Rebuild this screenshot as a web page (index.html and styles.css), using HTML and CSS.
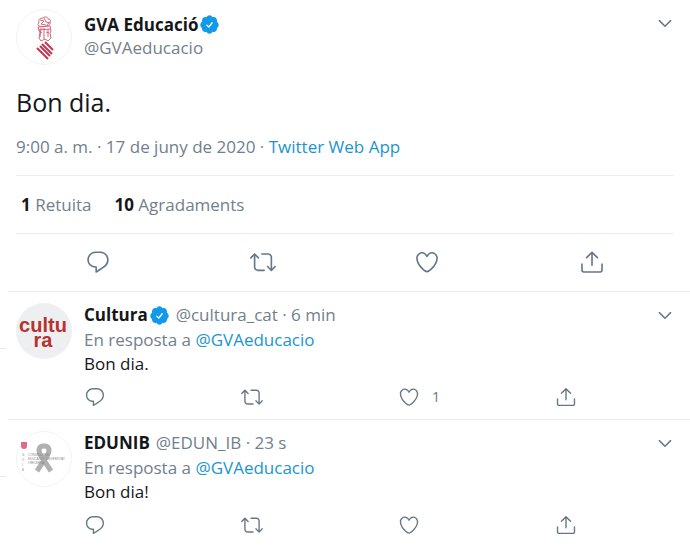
FILE: index.html
```
<!DOCTYPE html>
<html lang="ca">
<head>
    <meta charset="UTF-8">
    <meta name="viewport" content="width=device-width, initial-scale=1.0">
    <title>GVA Educació</title>
    <link rel="stylesheet" href="styles.css">
</head>
<body>

<!-- Shared icons -->
<svg class="sprite" aria-hidden="true">
    <symbol id="reply" viewBox="0 0 24 24">
        <path d="M14.046 2.242l-4.148-.01h-.002c-4.374 0-7.8 3.427-7.8 7.802 0 4.098 3.186 7.206 7.465 7.37v3.828c0 .108.044.286.12.403.142.225.384.347.632.347.138 0 .277-.038.402-.118.264-.168 6.473-4.14 8.088-5.506 1.902-1.61 3.04-3.97 3.043-6.312v-.017c-.006-4.367-3.43-7.787-7.8-7.788zm3.787 12.972c-1.134.96-4.862 3.405-6.772 4.643V16.67c0-.414-.335-.75-.75-.75h-.396c-3.66 0-6.318-2.476-6.318-5.886 0-3.534 2.768-6.302 6.3-6.302l4.147.01h.002c3.532 0 6.3 2.766 6.302 6.296-.003 1.91-.942 3.844-2.514 5.176z"/>
    </symbol>
    <symbol id="retweet" viewBox="0 0 24 24">
        <path d="M23.77 15.67c-.292-.293-.767-.293-1.06 0l-2.22 2.22V7.65c0-2.068-1.683-3.75-3.75-3.75h-5.85c-.414 0-.75.336-.75.75s.336.75.75.75h5.85c1.24 0 2.25 1.01 2.25 2.25v10.24l-2.22-2.22c-.293-.293-.768-.293-1.06 0s-.294.768 0 1.06l3.5 3.5c.145.147.337.22.53.22s.383-.072.53-.22l3.5-3.5c.294-.292.294-.767 0-1.06zm-10.66 3.28H7.26c-1.24 0-2.25-1.01-2.25-2.25V6.46l2.22 2.22c.148.147.34.22.532.22s.384-.073.53-.22c.293-.293.293-.768 0-1.06l-3.5-3.5c-.293-.294-.768-.294-1.06 0l-3.5 3.5c-.294.292-.294.767 0 1.06s.767.293 1.06 0l2.22-2.22V16.7c0 2.068 1.683 3.75 3.75 3.75h5.85c.414 0 .75-.336.75-.75s-.337-.75-.75-.75z"/>
    </symbol>
    <symbol id="like" viewBox="0 0 24 24">
        <path d="M12 21.638h-.014C9.403 21.59 1.95 14.856 1.95 8.478c0-3.064 2.525-5.754 5.403-5.754 2.29 0 3.83 1.58 4.646 2.73.814-1.148 2.354-2.73 4.645-2.73 2.88 0 5.404 2.69 5.404 5.755 0 6.376-7.454 13.11-10.037 13.157H12zM7.354 4.225c-2.08 0-3.903 1.988-3.903 4.255 0 5.74 7.034 11.596 8.55 11.658 1.518-.062 8.55-5.917 8.55-11.658 0-2.267-1.823-4.255-3.903-4.255-2.528 0-3.94 2.936-3.952 2.965-.23.562-1.156.562-1.387 0-.014-.03-1.425-2.965-3.954-2.965z"/>
    </symbol>
    <symbol id="share" viewBox="0 0 24 24">
        <path d="M17.53 7.47l-5-5c-.293-.293-.768-.293-1.06 0l-5 5c-.294.293-.294.768 0 1.06s.767.294 1.06 0l3.72-3.72V15c0 .414.336.75.75.75s.75-.336.75-.75V4.81l3.72 3.72c.146.147.338.22.53.22s.384-.072.53-.22c.293-.293.293-.767 0-1.06z"/>
        <path d="M19.708 21.944H4.292C3.028 21.944 2 20.916 2 19.652V14c0-.414.336-.75.75-.75s.75.336.75.75v5.652c0 .437.355.792.792.792h15.416c.437 0 .792-.355.792-.792V14c0-.414.336-.75.75-.75s.75.336.75.75v5.652c0 1.264-1.028 2.292-2.292 2.292z"/>
    </symbol>
    <symbol id="chevron" viewBox="0 0 24 24">
        <path d="M20.207 8.147c-.39-.39-1.023-.39-1.414 0L12 14.94 5.207 8.147c-.39-.39-1.023-.39-1.414 0-.39.39-.39 1.023 0 1.414l7.5 7.5c.195.196.45.294.707.294s.512-.098.707-.293l7.5-7.5c.39-.39.39-1.022 0-1.413z"/>
    </symbol>
    <symbol id="verified" viewBox="0 0 24 24">
        <path fill="#1199ea" d="M22.5 12.5c0-1.58-.875-2.95-2.148-3.6.154-.435.238-.905.238-1.4 0-2.21-1.71-3.998-3.818-3.998-.47 0-.92.084-1.336.25C14.818 2.415 13.51 1.5 12 1.5s-2.816.917-3.437 2.25c-.415-.165-.866-.25-1.336-.25-2.11 0-3.818 1.79-3.818 4 0 .494.083.964.237 1.4-1.272.65-2.147 2.018-2.147 3.6 0 1.495.782 2.798 1.942 3.486-.02.17-.032.34-.032.514 0 2.21 1.708 4 3.818 4 .47 0 .92-.086 1.335-.25.62 1.334 1.926 2.25 3.437 2.25 1.512 0 2.818-.916 3.437-2.25.415.163.865.248 1.336.248 2.11 0 3.818-1.79 3.818-4 0-.174-.012-.344-.033-.513 1.158-.687 1.943-1.99 1.943-3.484z"/>
        <path fill="none" stroke="#fff" stroke-width="1.5" stroke-linecap="round" stroke-linejoin="round" d="M9 12.8l2.2 2.1 3.8-4.9"/>
    </symbol>
</svg>

<main>
    <article class="tweet">
        <header class="tweet-header">
            <svg class="avatar" viewBox="0 0 56 56" role="img" aria-label="GVA Educació">
                <circle cx="28" cy="28" r="27.5" fill="#fff" stroke="#f1f3f4"/>
                <g fill="none" stroke="#d4647a" stroke-width="1">
                    <path d="M23 14c-1-3 1-5 4-5 2-2 5-1 5 1 2 0 3 1 2 3 1 2-1 4-3 4-2 1-6 1-7 0-2 0-3-2-1-3z"/>
                    <path d="M24 11l4 1-3 3 5 1M28 9l2 4 4 1M31 17l2-4"/>
                    <path d="M22 18l12-1 1 5-1 2 1 5-3 3-3-2-4 2-2-3 1-5z"/>
                    <path d="M22 21l12-1M28 19v11M24 24l2-1M30 23l3 1M25 19l-1 9M32 20v8"/>
                </g>
                <path stroke="#c93451" stroke-width="2" fill="none" d="M29 33l8 8M26 35l10 10M24 37l10 10M21 39l11 11"/>
            </svg>
            <div class="names">
                <div class="name-line">
                    <a class="name" href="#">GVA Educació</a>
                    <svg class="badge" role="img" aria-label="Compte verificat"><use href="#verified"/></svg>
                </div>
                <div class="handle">@GVAeducacio</div>
            </div>
            <button class="more" type="button" aria-label="Més"><svg><use href="#chevron"/></svg></button>
        </header>

        <p class="tweet-text">Bon dia.</p>
        <p class="tweet-date">9:00 a. m. · 17 de juny de 2020 · <a href="#">Twitter Web App</a></p>

        <div class="stats">
            <span><b>1</b> Retuita</span>
            <span><b>10</b> Agradaments</span>
        </div>

        <div class="tweet-actions">
            <button type="button" aria-label="Respon"><svg><use href="#reply"/></svg></button>
            <button type="button" aria-label="Retuita"><svg><use href="#retweet"/></svg></button>
            <button type="button" aria-label="M'agrada"><svg><use href="#like"/></svg></button>
            <button type="button" aria-label="Comparteix"><svg><use href="#share"/></svg></button>
        </div>
    </article>

    <article class="reply">
        <svg class="avatar" viewBox="0 0 56 56" role="img" aria-label="Cultura">
            <circle cx="28" cy="28" r="28" fill="#eeeff0"/>
            <text class="logo-text" x="27" y="29" text-anchor="middle">cultu</text>
            <text class="logo-text" x="27" y="44" text-anchor="middle">ra</text>
        </svg>
        <div class="reply-body">
            <div class="name-line">
                <a class="name" href="#">Cultura</a>
                <svg class="badge" role="img" aria-label="Compte verificat"><use href="#verified"/></svg>
                <span class="meta">@cultura_cat · 6 min</span>
                <button class="more" type="button" aria-label="Més"><svg><use href="#chevron"/></svg></button>
            </div>
            <p class="reply-to">En resposta a <a href="#">@GVAeducacio</a></p>
            <p class="reply-text">Bon dia.</p>
            <div class="reply-actions">
                <button type="button" aria-label="Respon"><svg><use href="#reply"/></svg></button>
                <button type="button" aria-label="Retuita"><svg><use href="#retweet"/></svg></button>
                <button type="button" aria-label="M'agrada"><svg><use href="#like"/></svg><span>1</span></button>
                <button type="button" aria-label="Comparteix"><svg><use href="#share"/></svg></button>
            </div>
        </div>
    </article>

    <article class="reply">
        <svg class="avatar" viewBox="0 0 56 56" role="img" aria-label="EDUNIB">
            <circle cx="28" cy="28" r="27.5" fill="#fff" stroke="#f1f3f4"/>
            <path fill="#dc6c8c" d="M5 11h6v4c0 2-1 3-3 3-2 0-3-1-3-3z"/>
            <path fill="none" stroke="#b0b0b0" stroke-width="5" stroke-linejoin="round" d="M21 40l10-15c3-5 3-10-3-10s-6 5-3 10l10 15"/>
            <g class="edu-text">
                <text x="6" y="25">G</text>
                <text x="6" y="30">O</text>
                <text x="6" y="35">I</text>
                <text x="6" y="40">B</text>
                <text x="12" y="25">CONSELLERIA</text>
                <text x="12" y="29">EDUCACIÓ, UNIVERSITAT</text>
                <text x="12" y="33">I RECERCA</text>
            </g>
        </svg>
        <div class="reply-body">
            <div class="name-line">
                <a class="name" href="#">EDUNIB</a>
                <span class="meta">@EDUN_IB · 23 s</span>
                <button class="more" type="button" aria-label="Més"><svg><use href="#chevron"/></svg></button>
            </div>
            <p class="reply-to">En resposta a <a href="#">@GVAeducacio</a></p>
            <p class="reply-text">Bon dia!</p>
            <div class="reply-actions">
                <button type="button" aria-label="Respon"><svg><use href="#reply"/></svg></button>
                <button type="button" aria-label="Retuita"><svg><use href="#retweet"/></svg></button>
                <button type="button" aria-label="M'agrada"><svg><use href="#like"/></svg></button>
                <button type="button" aria-label="Comparteix"><svg><use href="#share"/></svg></button>
            </div>
        </div>
    </article>
</main>

</body>
</html>
```
FILE: styles.css
```
* {
    box-sizing: border-box;
}

body {
    margin: 0;
    background: #fff;
    color: #14171a;
    font-family: "Open Sans", "Noto Sans", sans-serif;
    font-size: 17px;
    line-height: 24px;
}

p {
    margin: 0;
}

a {
    color: #1b95d0;
    text-decoration: none;
}

button {
    display: flex;
    align-items: center;
    padding: 0;
    border: 0;
    background: none;
    color: #657786;
    font: inherit;
    cursor: pointer;
}

svg {
    display: block;
    flex: none;
    fill: currentColor;
}

.sprite {
    display: none;
}

main {
    padding-left: 8px;
}

.avatar {
    width: 56px;
    height: 56px;
}

.name-line {
    display: flex;
    align-items: center;
}

.name {
    color: #14171a;
    font-weight: 700;
}

.badge {
    width: 21px;
    height: 21px;
    margin-left: 1px;
}

.handle,
.meta,
.reply-to,
.tweet-date,
.stats {
    color: #72808c;
}

.meta {
    margin-left: 6px;
}

.more {
    margin-left: auto;
}

.more svg {
    width: 18px;
    height: 18px;
}

/* Main tweet */
.tweet {
    padding: 9px 16px 0 8px;
}

.tweet-header {
    display: flex;
    align-items: flex-start;
    gap: 12px;
}

.names {
    padding-top: 4px;
    line-height: 23px;
}

.tweet-header .more {
    padding-top: 5px;
}

.tweet-text {
    margin-top: 20px;
    font-size: 25px;
    line-height: 34px;
}

.tweet-date {
    margin-top: 16px;
}

.stats {
    display: flex;
    gap: 23px;
    margin-top: 16px;
    padding: 17px 5px 16px;
    border-top: 1px solid #e9edf0;
    border-bottom: 1px solid #e9edf0;
}

.stats b {
    color: #14171a;
}

.tweet-actions {
    display: flex;
    justify-content: space-around;
    padding: 15px 0 16px;
}

.tweet-actions svg {
    width: 26px;
    height: 26px;
}

/* Replies */
.reply {
    position: relative;
    display: flex;
    gap: 12px;
    padding: 11px 16px 11px 8px;
    border-top: 1px solid #e6ecf0;
}

/* short end of the neighbouring column's divider */
.reply::before {
    content: "";
    position: absolute;
    top: 56px;
    left: -8px;
    width: 6px;
    height: 1px;
    background: #e6ecf0;
}

.reply-body {
    flex: 1;
}

.reply-to {
    margin-top: 1px;
}

.reply-actions {
    display: grid;
    grid-template-columns: 1fr 1fr 1fr auto;
    max-width: 493px;
    margin-top: 10px;
}

.reply-actions svg {
    width: 22px;
    height: 22px;
}

.reply-actions span {
    margin-left: 12px;
    font-size: 14px;
    line-height: 22px;
}

.logo-text {
    fill: #b8322f;
    font: bold 20px "Liberation Sans", Arial, sans-serif;
}

.edu-text {
    fill: #8b8b8b;
    font: 3px "Liberation Sans", Arial, sans-serif;
}
```
